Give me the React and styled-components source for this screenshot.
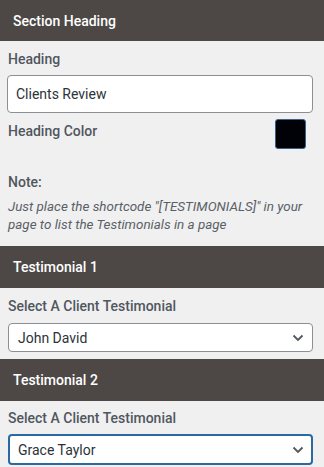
import React from 'react';
import styled, { createGlobalStyle } from 'styled-components';

const GlobalStyle = createGlobalStyle`
    html, body {
        margin: 0;
        padding: 0;
        background: #f0f0f1;
    }
    body {
        font-family: Roboto, "Liberation Sans", sans-serif;
        width: 324px;
        overflow: hidden;
    }
`;

const Panel = styled.div`
    display: flex;
    flex-direction: column;
    width: 324px;
    background: #f0f0f1;
`;

const SectionBar = styled.div`
    display: flex;
    align-items: center;
    height: ${props => props.tall ? 42 : 41}px;
    padding-left: 13px;
    background: #4d4846;
    color: #fff;
    font-size: 14px;
    font-weight: 500;
`;

const Body = styled.div`
    display: flex;
    flex-direction: column;
    padding: ${props => props.pad || '0 11px 0 7px'};
`;

const Label = styled.div`
    color: #50575e;
    font-size: 14px;
    font-weight: 500;
    line-height: 18px;
    margin: ${props => props.m || '0'};
    padding-left: 1px;
`;

const TextInput = styled.input`
    box-sizing: border-box;
    width: 100%;
    height: 38px;
    padding: 0 8px;
    border: 1px solid #8c8f94;
    border-radius: 4px;
    background: #fff;
    color: #2c3338;
    font-family: inherit;
    font-size: 14px;
    outline: none;
`;

const ColorRow = styled.div`
    display: flex;
    align-items: flex-start;
    justify-content: space-between;
    margin-top: 6px;
`;

const Swatch = styled.div`
    width: 31px;
    height: 30px;
    margin-right: 7px;
    box-sizing: border-box;
    border: 1px solid #3a5f8a;
    border-radius: 3px;
    background: #000208;
`;

const NoteText = styled.p`
    margin: 7px 0 0;
    padding-left: 1px;
    color: #5a6066;
    font-size: 13.4px;
    font-style: italic;
    line-height: 18px;
`;

const SelectWrap = styled.div`
    position: relative;
    margin: ${props => props.m || '0'};
`;

const Select = styled.div`
    box-sizing: border-box;
    display: flex;
    align-items: center;
    height: ${props => props.focused ? 31 : 29}px;
    border: ${props => props.focused ? '2px solid #2b6aa0' : '1px solid #8c8f94'};
    border-radius: 4px;
    background: #fff;
    color: #2c3338;
    font-size: 14px;
    padding-left: ${props => props.focused ? 8 : 9}px;
`;

const Chevron = styled.svg`
    position: absolute;
    right: 9px;
    top: 50%;
    transform: translateY(-50%);
`;

function ClientSelect({ value, focused, m }) {
    return (
        <SelectWrap m={m}>
            <Select focused={focused}>{value}</Select>
            <Chevron width="12" height="8" viewBox="0 0 12 8">
                <path d="M1.5 1.5 L6 6 L10.5 1.5" fill="none" stroke="#50575e" strokeWidth="1.8" />
            </Chevron>
        </SelectWrap>
    );
}

export default function App() {
    return (
        <Panel>
            <GlobalStyle />
            <SectionBar>Section Heading</SectionBar>
            <Body>
                <Label m="9px 0 0">Heading</Label>
                <div style={{ marginTop: 7 }}>
                    <TextInput defaultValue="Clients Review" />
                </div>
                <ColorRow>
                    <Label m="3px 0 0">Heading Color</Label>
                    <Swatch />
                </ColorRow>
                <Label m="24px 0 0">Note:</Label>
                <NoteText>
                    Just place the shortcode "[TESTIMONIALS]" in your page to list the Testimonials in a page
                </NoteText>
            </Body>
            <SectionBar tall style={{ marginTop: 12 }}>Testimonial 1</SectionBar>
            <Body>
                <Label m="9px 0 0">Select A Client Testimonial</Label>
                <ClientSelect value="John David" m="8px 0 0 1px" />
            </Body>
            <SectionBar tall style={{ marginTop: 7 }}>Testimonial 2</SectionBar>
            <Body>
                <Label m="8px 0 0">Select A Client Testimonial</Label>
                <ClientSelect value="Grace Taylor" focused m="7px 0 0 1px" />
            </Body>
        </Panel>
    );
}
